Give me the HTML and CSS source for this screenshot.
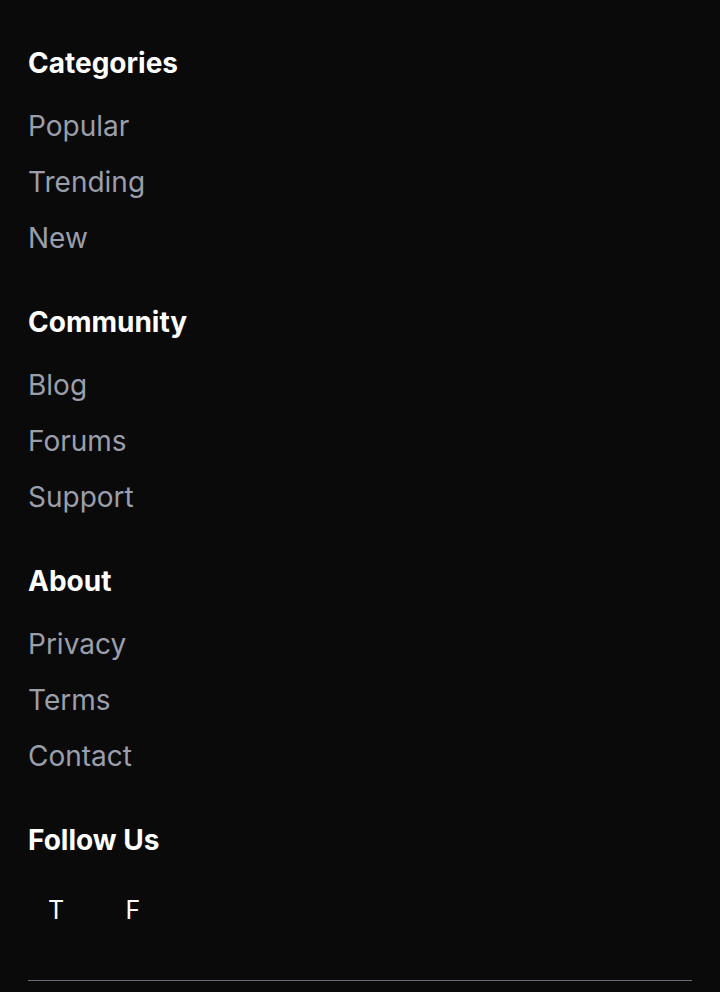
FILE: index.html
```html
<!DOCTYPE html>
<html lang="en">
<head>
<meta charset="utf-8">
<meta name="viewport" content="width=device-width, initial-scale=1">
<title>Footer</title>
<link rel="stylesheet" href="styles.css">
</head>
<body>
<footer class="footer">
  <div class="footer-columns">
    <nav class="footer-section" aria-labelledby="categories">
      <h2 class="footer-title" id="categories">Categories</h2>
      <ul class="footer-links">
        <li><a href="#">Popular</a></li>
        <li><a href="#">Trending</a></li>
        <li><a href="#">New</a></li>
      </ul>
    </nav>
    <nav class="footer-section" aria-labelledby="community">
      <h2 class="footer-title" id="community">Community</h2>
      <ul class="footer-links">
        <li><a href="#">Blog</a></li>
        <li><a href="#">Forums</a></li>
        <li><a href="#">Support</a></li>
      </ul>
    </nav>
    <nav class="footer-section" aria-labelledby="about">
      <h2 class="footer-title" id="about">About</h2>
      <ul class="footer-links">
        <li><a href="#">Privacy</a></li>
        <li><a href="#">Terms</a></li>
        <li><a href="#">Contact</a></li>
      </ul>
    </nav>
    <section class="footer-section">
      <h2 class="footer-title">Follow Us</h2>
      <div class="social">
        <a class="social-link" href="#">T</a>
        <a class="social-link" href="#">F</a>
      </div>
    </section>
  </div>
</footer>
</body>
</html>
```

FILE: styles.css
```css
* {
  box-sizing: border-box;
}

body {
  margin: 0;
  background: #0a0a0a;
  color: #fff;
  font-family: Inter, sans-serif;
  font-size: 28px;
  line-height: 42px;
}

.footer {
  padding: 42px 28px 0;
}

.footer-columns {
  display: grid;
  gap: 42px;
  padding-bottom: 42px;
  border-bottom: 1px solid #6b6e76;
}

.footer-title {
  margin: 0 0 21px;
  font-size: 28px;
  line-height: 42px;
  font-weight: 700;
}

.footer-links {
  display: grid;
  gap: 14px;
  margin: 0;
  padding: 0;
  list-style: none;
}

.footer-links a {
  display: block;
  color: #9a9fab;
  text-decoration: none;
}

.social {
  display: flex;
  gap: 21px;
}

.social-link {
  display: flex;
  align-items: center;
  justify-content: center;
  width: 56px;
  height: 56px;
  color: #fff;
  font-size: 25px;
  text-decoration: none;
}
```
